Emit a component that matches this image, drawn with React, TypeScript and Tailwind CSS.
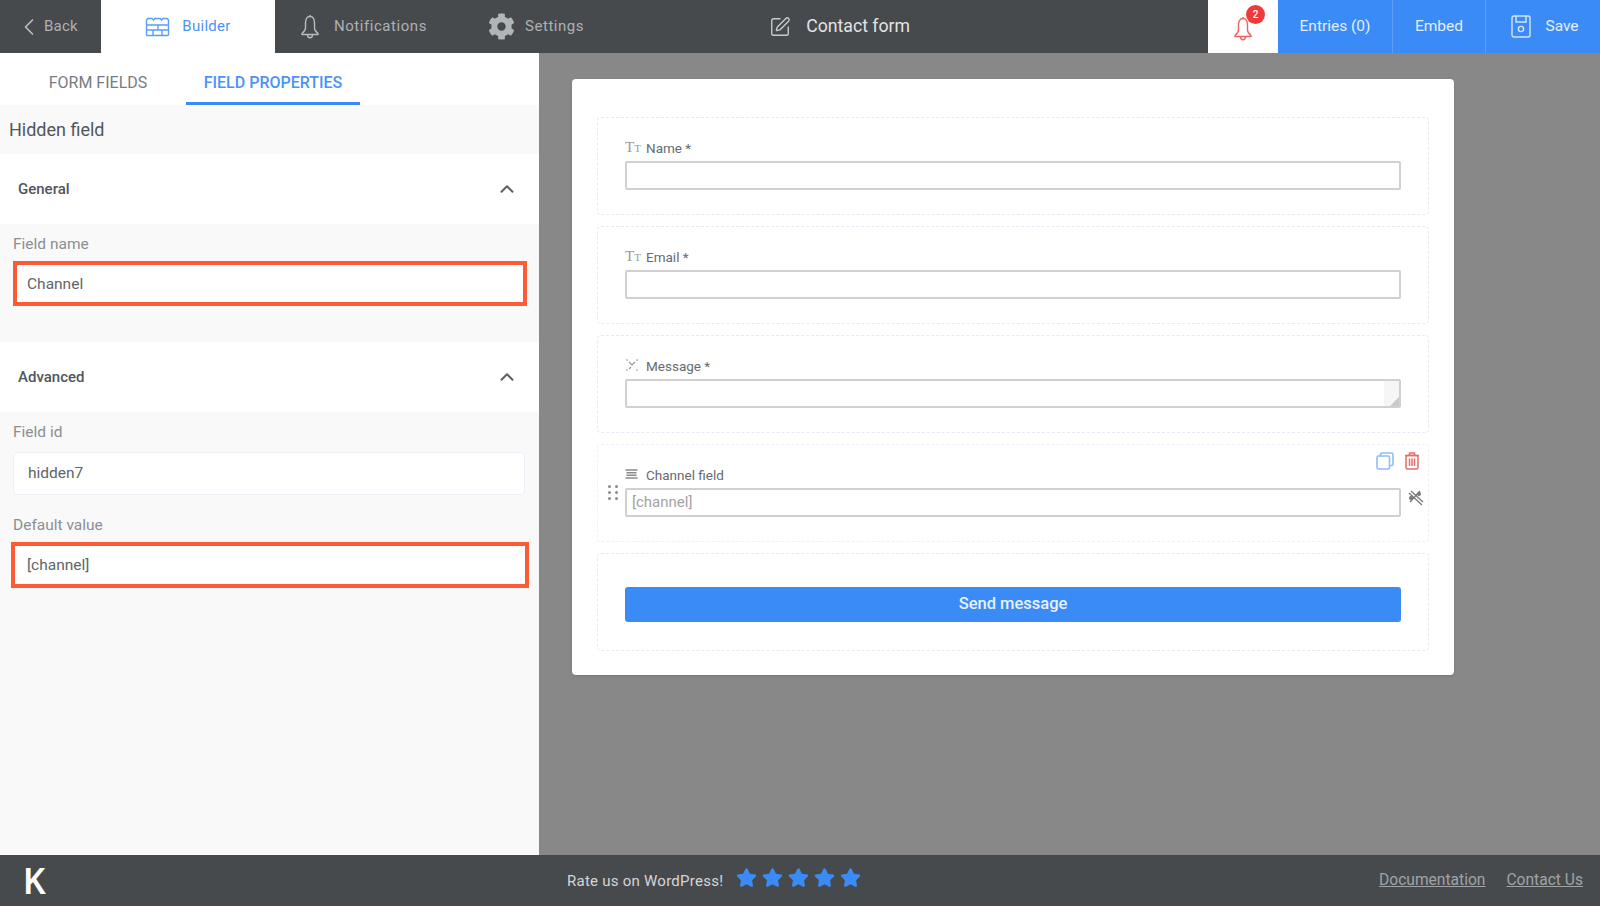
import { ChevronLeft, ChevronUp, SquarePen } from 'lucide-react';
import { FaCog, FaStar } from 'react-icons/fa';

const BuilderIcon = () => (
  <svg width="25" height="20" viewBox="0 0 25 20" fill="none" stroke="#5a9cf8" strokeWidth="1.4">
    <path d="M1.5 8V3L3 1.5H7L8.5 3L10 1.5H15L16.5 3L18 1.5H22L23.5 3V8" />
    <rect x="1.5" y="8" width="22" height="10.5" rx="1" />
    <path d="M1.5 13H23.5M13 8V13M8 13V18.5M17 13V18.5" />
  </svg>
);

const BellIcon = ({ color }: { color: string }) => (
  <svg width="20" height="25" viewBox="0 0 20 25" fill="none" stroke={color} strokeWidth="1.4" strokeLinejoin="round">
    <path d="M10 2.5C6.5 2.5 5.5 6 5.5 9V14C5.5 16.5 3.8 18 2 19.5V20.5H18V19.5C16.2 18 14.5 16.5 14.5 14V9C14.5 6 13.5 2.5 10 2.5Z" />
    <path d="M10 2.5V1M7.5 20.5C7.5 22.5 8.5 23.7 10 23.7C11.5 23.7 12.5 22.5 12.5 20.5" />
  </svg>
);

const SaveIcon = () => (
  <svg width="20" height="23" viewBox="0 0 20 23" fill="none" stroke="#d6e6fd" strokeWidth="1.4">
    <rect x="1" y="1" width="18" height="21" rx="2" />
    <path d="M5 1V7H15V1" />
    <circle cx="10" cy="14" r="2.6" />
  </svg>
);

const TextIcon = () => (
  <span className="-mt-[2px] w-[21px] font-['Liberation_Serif',serif] leading-none text-[#999]">
    <span className="text-[15px]">T</span>
    <span className="text-[11px]">T</span>
  </span>
);

const AreaIcon = () => (
  <span className="-mt-[2px] w-[21px]">
    <svg width="14" height="12" viewBox="0 0 14 12" fill="none" stroke="#999" strokeWidth="1.2">
      <path d="M1 1H3M11 1H13M4 3L7 6L10 3M7 6V6.5M4 10L6 8M1 11H3M11 11H13" />
    </svg>
  </span>
);

const HiddenIcon = () => (
  <span className="-mt-[2px] w-[21px]">
    <svg width="13" height="10" viewBox="0 0 13 10" fill="none" stroke="#8a8a8a" strokeWidth="1.3">
      <path d="M0.5 1H12.5M0.5 9H12.5" />
      <path d="M1.5 3.5H11.5M1.5 5H11.5M1.5 6.5H11.5" strokeWidth="1" />
    </svg>
  </span>
);

const CopyIcon = () => (
  <svg width="18" height="18" viewBox="0 0 18 18" fill="none" stroke="#8fbcfa" strokeWidth="1.6">
    <rect x="1" y="4" width="12.5" height="13" rx="1.5" />
    <path d="M4.5 4V2.5C4.5 1.7 5.2 1 6 1H15.5C16.3 1 17 1.7 17 2.5V12C17 12.8 16.3 13.5 15.5 13.5H13.5" />
  </svg>
);

const TrashIcon = () => (
  <svg width="16" height="18" viewBox="0 0 16 18" fill="none" stroke="#ea6a6a" strokeWidth="1.5">
    <path d="M1 3.5H15M5.5 3.5V1H10.5V3.5" />
    <rect x="2" y="3.5" width="12" height="13.5" rx="1.5" />
    <path d="M5.5 6.5V14M8 6.5V14M10.5 6.5V14" />
  </svg>
);

const UnlinkIcon = () => (
  <svg width="17" height="17" viewBox="0 0 17 17" fill="none" stroke="#777" strokeWidth="1.3">
    <path d="M2 4L15 16M4 2L16 13M13 2L3 13" />
    <circle cx="4" cy="9" r="1.3" fill="#777" />
    <circle cx="12" cy="5" r="1.3" fill="#777" />
  </svg>
);

const NavText = ({ children }: { children: React.ReactNode }) => (
  <span className="text-[15px] tracking-[0.55px] text-[#aeb1b3]">{children}</span>
);

const SectionHeader = ({ title }: { title: string }) => (
  <div className="flex h-[70px] items-center justify-between bg-white pl-[18px] pr-[21px]">
    <span className="text-[15px] font-medium text-[#50565a]">{title}</span>
    <ChevronUp size={22} strokeWidth={2.2} className="text-[#5c6266]" />
  </div>
);

const SideLabel = ({ children, className = '' }: { children: React.ReactNode; className?: string }) => (
  <div className={`h-5 text-[15.5px] leading-5 text-[#8a8f93] ${className}`}>{children}</div>
);

const FormRow = ({
  icon,
  label,
  active,
  children,
}: {
  icon: React.ReactNode;
  label: string;
  active?: boolean;
  children: React.ReactNode;
}) => (
  <div
    className={`relative h-[98px] rounded border border-dashed px-[27px] pt-[20px] ${active ? 'border-[#eef0fb]' : 'border-[#e8e9f5]'}`}
  >
    <div className="flex h-5 items-center text-[13.5px] text-[#666b6f]">
      {icon}
      {label}
    </div>
    {children}
  </div>
);

const PreviewInput = ({ children }: { children?: React.ReactNode }) => (
  <div className="relative mt-[3px] flex h-[29px] items-center rounded-[2px] border-2 border-[#d0d0d0] bg-white px-[5px] text-[15px] text-[#a3a3a3]">
    {children}
  </div>
);

export default function App() {
  return (
    <div className="flex h-[906px] w-[1600px] flex-col overflow-hidden bg-[#888888] font-['Roboto',sans-serif]">
      {/* barra superior */}
      <header className="flex h-[53px] shrink-0 items-stretch bg-[#464a4d]">
        <div className="flex w-[101px] items-center pl-[15px]">
          <ChevronLeft size={28} strokeWidth={1.5} className="mr-[1px] text-[#b9bcbe]" />
          <span className="text-[15px] tracking-[0.2px] text-[#aeb1b3]">Back</span>
        </div>
        <div className="flex w-[174px] items-center justify-center gap-[12px] bg-white">
          <BuilderIcon />
          <span className="text-[15px] tracking-[0.3px] text-[#4c93f7]">Builder</span>
        </div>
        <div className="flex items-center pl-[25px]">
          <span className="mr-[14px] flex">
            <BellIcon color="#b9bcbe" />
          </span>
          <NavText>Notifications</NavText>
        </div>
        <div className="flex items-center pl-[61px]">
          <FaCog size={27} className="mr-[10px] text-[#b2b5b7]" />
          <NavText>Settings</NavText>
        </div>
        <div className="flex items-center pl-[185px]">
          <SquarePen size={22} strokeWidth={1.5} className="mr-[15px] text-[#c9cbcc]" />
          <span className="text-[17.7px] text-[#e2e3e4]">Contact form</span>
        </div>
        <div className="relative ml-auto flex w-[70px] items-center justify-center bg-white">
          <span className="mt-[4px] flex">
            <BellIcon color="#f26060" />
          </span>
          <span className="absolute left-[38px] top-[5px] flex h-[19px] w-[19px] items-center justify-center rounded-full bg-[#f03a3a] text-[10px] font-medium text-white">
            2
          </span>
        </div>
        <div className="flex w-[115px] items-center justify-center border-r border-[#5f9ef8] bg-[#3b8bf7] text-[15.5px] text-[#e3eefd]">
          Entries (0)
        </div>
        <div className="flex w-[93px] items-center justify-center border-r border-[#5f9ef8] bg-[#3b8bf7] text-[15.5px] text-[#e3eefd]">
          Embed
        </div>
        <div className="flex w-[114px] items-center justify-center gap-[14px] bg-[#3b8bf7] pl-[4px] text-[15.5px] text-[#e3eefd]">
          <SaveIcon />
          Save
        </div>
      </header>

      <div className="flex min-h-0 flex-1">
        {/* panel lateral */}
        <aside className="w-[539px] shrink-0 bg-[#f9f9fa]">
          <div className="flex h-[52px] items-stretch bg-white">
            <div className="flex w-[186px] items-center justify-center pl-[10px] pt-[8px] text-[16px] text-[#777c80]">
              FORM FIELDS
            </div>
            <div className="flex w-[174px] items-center justify-center border-b-[3px] border-[#3b8bf7] pt-[11px] text-[16px] font-medium text-[#4c93f7]">
              FIELD PROPERTIES
            </div>
          </div>
          <div className="flex h-[49px] items-center pl-[9px] text-[18px] text-[#50565a]">Hidden field</div>

          <SectionHeader title="General" />
          <div className="h-[118px] px-[13px] pt-[10px]">
            <SideLabel>Field name</SideLabel>
            <div className="mt-[7px] flex h-[45px] w-[514px] items-center border-[4px] border-[#ff5a36] bg-white pl-[10px] pt-[2px] text-[15.5px] text-[#60656a]">
              Channel
            </div>
          </div>

          <SectionHeader title="Advanced" />
          <div className="px-[13px] pt-[10px]">
            <SideLabel>Field id</SideLabel>
            <div className="mt-[10px] flex h-[43px] w-[512px] items-center rounded border border-[#eef0f8] bg-white pl-[14px] text-[15.5px] text-[#60656a]">
              hidden7
            </div>
            <SideLabel className="mt-[20px]">Default value</SideLabel>
            <div className="-ml-[2px] mt-[7px] flex h-[46px] w-[518px] items-center border-[4px] border-[#ff5a36] bg-white pl-[12px] pt-[2px] text-[15.5px] text-[#60656a]">
              [channel]
            </div>
          </div>
        </aside>

        {/* lienzo */}
        <main className="flex-1 pl-[33px] pt-[26px]">
          <div className="flex w-[882px] flex-col gap-[11px] rounded bg-white px-[25px] pb-[24px] pt-[38px] shadow-sm">
            <FormRow icon={<TextIcon />} label="Name *">
              <PreviewInput />
            </FormRow>
            <FormRow icon={<TextIcon />} label="Email *">
              <PreviewInput />
            </FormRow>
            <FormRow icon={<AreaIcon />} label="Message *">
              <PreviewInput>
                <span className="absolute bottom-0 right-0 top-0 w-[15px] bg-[#f6f6f6]" />
                <span className="absolute bottom-0 right-0 h-0 w-0 border-b-[9px] border-l-[9px] border-b-[#c9c9c9] border-l-transparent" />
              </PreviewInput>
            </FormRow>
            <FormRow icon={<HiddenIcon />} label="Channel field" active>
              <PreviewInput>[channel]</PreviewInput>
              <div className="absolute left-[10px] top-[40px] grid grid-cols-2 gap-x-[4px] gap-y-[3px]">
                {[0, 1, 2, 3, 4, 5].map((dot) => (
                  <span key={dot} className="h-[3px] w-[3px] rounded-full bg-[#8a8a8a]" />
                ))}
              </div>
              <div className="absolute right-[8px] top-[7px] flex items-center gap-[10px]">
                <CopyIcon />
                <TrashIcon />
              </div>
              <div className="absolute right-[4px] top-[44px]">
                <UnlinkIcon />
              </div>
            </FormRow>
            <div className="h-[98px] rounded border border-dashed border-[#e8e9f5] px-[27px] pt-[33px]">
              <div className="flex h-[35px] items-center justify-center rounded-[3px] bg-[#3b8bf7] text-[16.5px] font-medium text-[#e8f1fe]">
                Send message
              </div>
            </div>
          </div>
        </main>
      </div>

      {/* pie */}
      <footer className="relative flex h-[51px] shrink-0 items-center bg-[#464a4d] pl-[24px] pr-[17px]">
        <span className="w-[22px] origin-left scale-x-[0.85] pt-[3px] font-['Liberation_Sans',sans-serif] text-[36px] font-bold leading-none text-white">
          K
        </span>
        <div className="ml-[521px] flex items-center">
          <span className="pt-[1px] text-[15px] tracking-[0.25px] text-[#d5d6d7]">Rate us on WordPress!</span>
          <div className="-mt-[6px] ml-[13px] flex gap-[5px]">
            {[0, 1, 2, 3, 4].map((star) => (
              <FaStar key={star} size={21} className="text-[#3b8bf7]" />
            ))}
          </div>
        </div>
        <div className="ml-auto flex gap-[21px] pt-[1px] text-[15.6px] text-[#a0a3a5] underline">
          <span>Documentation</span>
          <span>Contact Us</span>
        </div>
      </footer>
    </div>
  );
}
